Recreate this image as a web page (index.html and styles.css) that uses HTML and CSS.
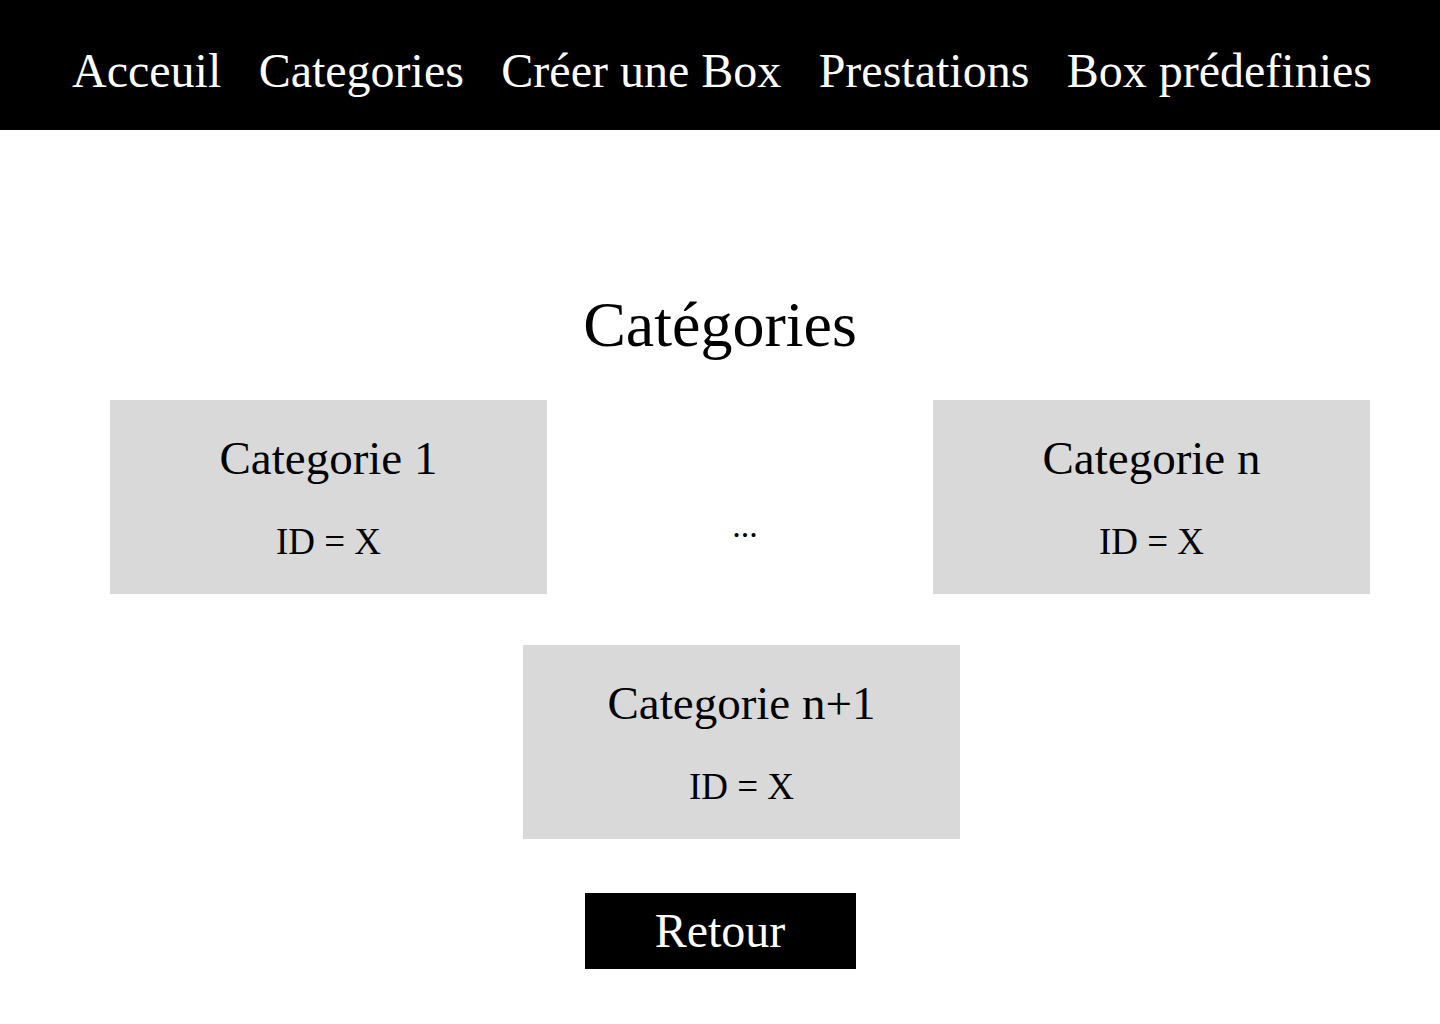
FILE: index.html
```html
<!DOCTYPE html>
<html lang="fr">
<head>
    <meta charset="UTF-8">
    <meta name="viewport" content="width=device-width, initial-scale=1.0">
    <title>Catégories</title>
    <link rel="stylesheet" href="styles.css">
</head>
<body>

    <nav class="navbar">
        <a href="#" class="nav-link">Acceuil</a>
        <a href="#" class="nav-link">Categories</a>
        <a href="#" class="nav-link">Créer une Box</a>
        <a href="#" class="nav-link">Prestations</a>
        <a href="#" class="nav-link">Box prédefinies</a>
    </nav>

    <main class="content">
        <h1 class="page-title">Catégories</h1>

        <div class="cat-row cat-row-top">
            <div class="cat-card">
                <h2 class="cat-name">Categorie 1</h2>
                <p class="cat-id">ID = X</p>
            </div>

            <div class="cat-dots">...</div>

            <div class="cat-card">
                <h2 class="cat-name">Categorie n</h2>
                <p class="cat-id">ID = X</p>
            </div>
        </div>

        <div class="cat-row cat-row-single">
            <div class="cat-card">
                <h2 class="cat-name">Categorie n+1</h2>
                <p class="cat-id">ID = X</p>
            </div>
        </div>

        <a href="#" class="btn-back">Retour</a>
    </main>

</body>
</html>
```

FILE: styles.css
```css
*{
    margin: 0;
    padding: 0;
    box-sizing: border-box;
    font-family: "Liberation Serif", "Times New Roman", serif;
    font-weight: normal;
}
body{
    background-color: #fff;
    color: #000;
}
a{
    text-decoration: none;
}
.navbar{
    display: flex;
    justify-content: space-between;
    height: 130px;
    padding: 12px 68px 0 72px;
    background-color: #000;
}
.nav-link{
    color: #fff;
    font-size: 48px;
    line-height: 118px;
    white-space: nowrap;
}
.content{
    display: flex;
    flex-direction: column;
    align-items: center;
    padding-top: 157px;
}
.page-title{
    font-size: 64px;
    line-height: 76px;
    margin-bottom: 37px;
}
.cat-row{
    display: flex;
    justify-content: space-between;
    align-items: flex-start;
    width: 1260px;
}
.cat-row-top{
    margin-left: 40px;
}
.cat-row-single{
    justify-content: center;
    padding-left: 43px;
    margin-top: 51px;
}
.cat-card{
    width: 437px;
    height: 194px;
    padding-top: 30px;
    background-color: #d9d9d9;
    text-align: center;
}
.cat-name{
    font-size: 47px;
    line-height: 56px;
}
.cat-id{
    font-size: 37px;
    line-height: 44px;
    margin-top: 34px;
}
.cat-dots{
    font-size: 34px;
    line-height: 36px;
    margin-top: 108px;
    padding-left: 10px;
}
.btn-back{
    display: block;
    width: 271px;
    height: 76px;
    margin-top: 54px;
    background-color: #000;
    color: #fff;
    font-size: 48px;
    line-height: 76px;
    text-align: center;
}
```
